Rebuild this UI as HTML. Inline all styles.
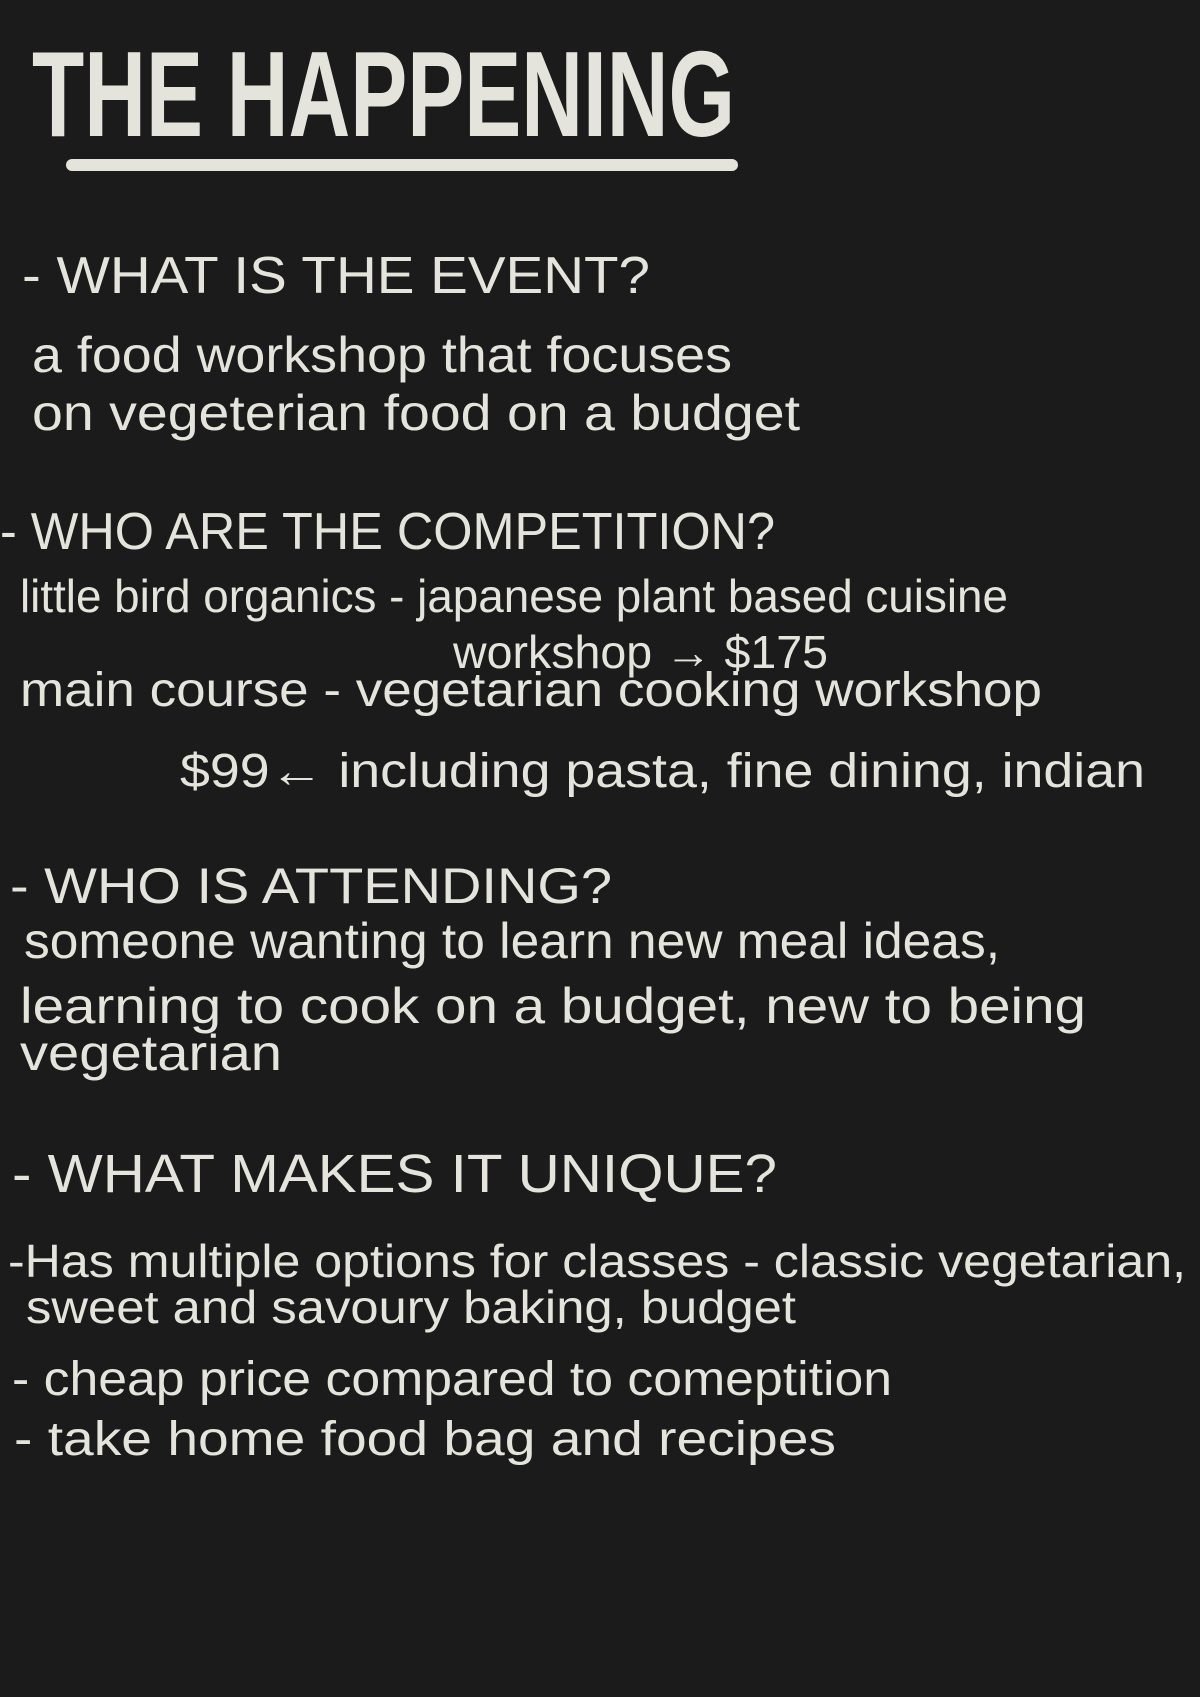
<!DOCTYPE html>
<html><head><meta charset="utf-8"><style>
html,body{margin:0;padding:0;background:#1b1b1b;}
svg{display:block}
text{font-family:"Liberation Sans",sans-serif;fill:#e4e4dc;}
</style></head><body>
<svg width="1200" height="1697" viewBox="0 0 1200 1697" xmlns="http://www.w3.org/2000/svg">
<rect width="1200" height="1697" fill="#1b1b1b"/>
<text x="32" y="136" font-size="122" font-weight="bold" textLength="703" lengthAdjust="spacingAndGlyphs">THE HAPPENING</text>
<rect x="66" y="159" width="672" height="12" rx="6" fill="#e4e4dc"/>
<text x="22" y="293" font-size="52" textLength="628" lengthAdjust="spacingAndGlyphs">- WHAT IS THE EVENT?</text>
<text x="32" y="372" font-size="50" textLength="700" lengthAdjust="spacingAndGlyphs">a food workshop that focuses</text>
<text x="32" y="430" font-size="50" textLength="768" lengthAdjust="spacingAndGlyphs">on vegeterian food on a budget</text>
<text x="0" y="549" font-size="52" textLength="775" lengthAdjust="spacingAndGlyphs">- WHO ARE THE COMPETITION?</text>
<text x="20" y="612" font-size="46" textLength="988" lengthAdjust="spacingAndGlyphs">little bird organics - japanese plant based cuisine</text>
<text x="453" y="668" font-size="46" textLength="375" lengthAdjust="spacingAndGlyphs">workshop → $175</text>
<text x="20" y="706" font-size="48" textLength="1022" lengthAdjust="spacingAndGlyphs">main course - vegetarian cooking workshop</text>
<text x="180" y="787" font-size="48" textLength="965" lengthAdjust="spacingAndGlyphs">$99← including pasta, fine dining, indian</text>
<text x="10" y="903" font-size="50" textLength="602" lengthAdjust="spacingAndGlyphs">- WHO IS ATTENDING?</text>
<text x="24" y="958" font-size="50" textLength="976" lengthAdjust="spacingAndGlyphs">someone wanting to learn new meal ideas,</text>
<text x="20" y="1023" font-size="50" textLength="1066" lengthAdjust="spacingAndGlyphs">learning to cook on a budget, new to being</text>
<text x="20" y="1070" font-size="50" textLength="262" lengthAdjust="spacingAndGlyphs">vegetarian</text>
<text x="12" y="1192" font-size="54" textLength="765" lengthAdjust="spacingAndGlyphs">- WHAT MAKES IT UNIQUE?</text>
<text x="8" y="1277" font-size="46" textLength="1178" lengthAdjust="spacingAndGlyphs">-Has multiple options for classes - classic vegetarian,</text>
<text x="26" y="1323" font-size="46" textLength="770" lengthAdjust="spacingAndGlyphs">sweet and savoury baking, budget</text>
<text x="12" y="1395" font-size="48" textLength="880" lengthAdjust="spacingAndGlyphs">- cheap price compared to comeptition</text>
<text x="14" y="1455" font-size="48" textLength="822" lengthAdjust="spacingAndGlyphs">- take home food bag and recipes</text>
</svg>
</body></html>
